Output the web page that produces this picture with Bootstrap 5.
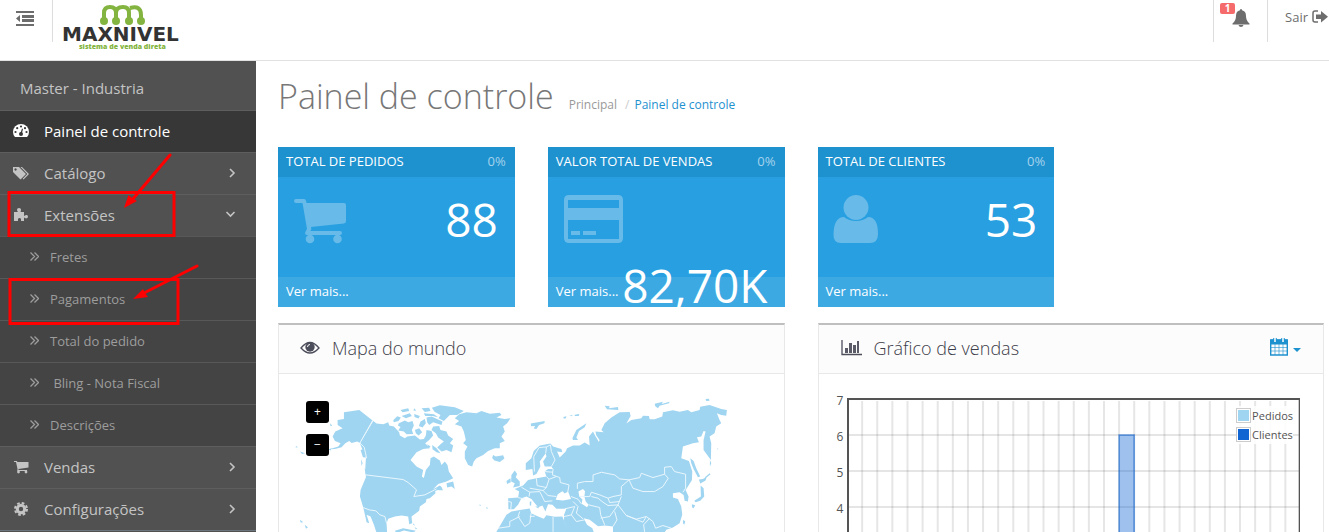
<!DOCTYPE html>
<html lang="pt-BR">
<head>
<meta charset="utf-8">
<meta name="viewport" content="width=device-width, initial-scale=1">
<title>Painel de controle</title>
<link href="https://cdn.jsdelivr.net/npm/bootstrap@5.3.0/dist/css/bootstrap.min.css" rel="stylesheet">
<style>
body{font-family:"Open Sans",sans-serif;font-size:13px;line-height:20px;color:#666;background:#fff}
a{text-decoration:none}
svg{display:block;flex:none}
.topbar{height:61px;border-bottom:1px solid #e1e1e1}
.topbar-cell{height:42px}
.menu-toggle{width:53px;border:0;border-right:1px solid #ddd;background:none;color:#6d6d6d;padding:0 0 6px 15px}
.logo-name{font:bold 20px "DejaVu Sans",sans-serif;fill:#333}
.logo-tag{font:800 7px "Open Sans",sans-serif;fill:#84b440}
.bell-link{width:55px;border-left:1px solid #ddd;border-right:1px solid #ddd;color:#6d6d6d;padding:9px 0 0 18px}
.bell-count{left:6px;top:3px;width:15px;height:11px;font-size:10px;line-height:11px;padding:0;background:#f56b6b;border-radius:2px}
.logout{color:#6d6d6d;padding:0 1px 8px 17px}
.sidebar{width:256px;background:#515151}
.profile{height:49px;padding:4px 20px 0;font-size:15px;color:#c4c4c4}
.side-link{height:42px;padding:0 20px 2px 13px;font-size:15px;color:#c4c4c4;border-top:1px solid #5e5e5e}
.side-link svg:first-child{width:16px;margin-right:15px}
.side-link.active{background:#373737;color:#fff}
.submenu{background:#444}
.sub-link{height:42px;padding:0 0 2px 30px;font-size:13px;color:#9d9d9d;border-top:1px solid #585858}
.sub-link svg{margin-right:11px}
.marks{left:0;top:0;pointer-events:none}
.content{padding:0 5px 0 22px}
.page-title{font-size:34px;line-height:46px;font-weight:300;color:#777;margin:0 15px 0 0}
.crumbs{--bs-breadcrumb-margin-bottom:0;--bs-breadcrumb-item-padding-x:8px;font-size:12px;--bs-breadcrumb-divider-color:#ccc}
.crumbs a{color:#999}
.crumbs .breadcrumb-item+.breadcrumb-item::before{padding-right:5px}
.crumbs .current a{color:#1e91cf}
.tiles,.panels{--bs-gutter-x:33px}
.tile{background:#279fe0;color:#fff}
.tile-head{height:30px;padding:0 9px 2px 8px;background:#1e91cf}
.tile-head span:last-child{color:#a5d3ec}
.tile-main{height:100px;padding:15px 17px 0 15px;z-index:1;pointer-events:none}
.tile-main svg{fill:#68bae9;color:#68bae9}
.tile-value{font-size:46px;line-height:54px;font-weight:400;margin:0}
.tile-foot{height:30px;padding:4px 8px;background:#3da9e3;color:#fff}
.box{border:1px solid #e8e8e8;border-top:2px solid #bfbfbf}
.box-head{height:49px;padding:0 21px 2px;background:#fcfcfc;border-bottom:1px solid #e8e8e8}
.box-head h2{font-size:18px;line-height:24px;font-weight:300;color:#3c3d4a;margin:0}
.date-btn{border:0;background:none;color:#1e91cf;padding:0 0 4px}
.zoom-set{left:27px;top:27px;gap:11px}
.zoom-set button{width:23px;height:22px;border:0;border-radius:3px;background:#000;color:#fff;font-size:12px;line-height:20px;padding:0}
.map-shape{fill:#9fd5f1}
.map-line{fill:none;stroke:#e9f6fd;stroke-width:3;stroke-linejoin:round}
.sea{fill:#fff}
.chart-area{padding:24px 23px 0 18px}
.y-axis{width:10px;font-size:12px;line-height:18px;margin:-6px 0 0;padding:0;color:#545454}
.y-axis li{height:36px}
.legend{top:8px;right:7px;background:rgba(255,255,255,.85);font-size:11px;line-height:19px;color:#545454;margin:0}
.swatch{width:15px;height:15px;margin-right:1px;border:1px solid #ccc;padding:1px;background-clip:content-box}
.swatch.pedidos{background-color:#9fd5f1}
.swatch.clientes{background-color:#1065d2}
</style>
</head>
<body class="vh-100 overflow-hidden d-flex flex-column">
<header class="topbar d-flex flex-shrink-0 align-items-start">
  <button class="menu-toggle topbar-cell" type="button" aria-label="Menu">
    <svg width="19" height="15" viewBox="0 0 19 15" fill="currentColor"><path d="M1 0h18v2H1zM7 4h12v3H7zM7 8h12v3H7zM1 13h18v2H1zM5 4v7L1 7.500z"/></svg>
  </button>
  <a href="#" class="ms-2" aria-label="Maxnivel">
    <svg width="124" height="54" viewBox="-4 0 124 54">
      <g fill="none" stroke="#84b440" stroke-width="4"><path d="M39 22V13Q39 7 45 7Q51 7 51 13V22M51 13Q51 7 58 7Q64 7 64 13V22M65 8Q76 5 76 15V22"/></g>
      <g fill="#84b440"><circle cx="39" cy="21" r="4"/><circle cx="51" cy="21" r="4"/><circle cx="64" cy="21" r="4"/><circle cx="76" cy="21" r="4"/></g>
      <text x="-3" y="41" class="logo-name">MAXNIVEL</text>
      <text x="14" y="49" class="logo-tag">sistema de venda direta</text>
    </svg>
  </a>
  <nav class="ms-auto d-flex">
    <a href="#" class="bell-link topbar-cell position-relative" aria-label="Notificações">
      <span class="bell-count badge position-absolute">1</span>
      <svg width="18" height="18" viewBox="0 0 18 18" fill="currentColor"><path d="M9 0Q10 0 10 1.200Q14 2 14 7Q14 12 17.500 14.500V15.500H.5V14.500Q4 12 4 7Q4 2 8 1.200Q8 0 9 0zM6.500 16H11.500Q11 18 9 18T6.500 16z"/></svg>
    </a>
    <a href="#" class="logout topbar-cell d-flex align-items-center gap-1">Sair
      <svg width="16" height="14" viewBox="0 0 16 14" fill="currentColor"><path d="M6 1H3Q1 1 1 3V10Q1 12 3 12H6" fill="none" stroke="currentColor" stroke-width="1.500"/><path d="M4 4.500H9V1L16 6.700L9 12.500V9H4z"/></svg>
    </a>
  </nav>
</header>
<div class="d-flex flex-grow-1 overflow-hidden">
  <aside class="sidebar flex-shrink-0 position-relative">
    <div class="profile d-flex align-items-center">Master - Industria</div>
    <nav>
      <a href="#" class="side-link active d-flex align-items-center">
        <svg width="16" height="13" viewBox="0 0 16 13" fill="currentColor"><path d="M2 13Q0 11 0 8A8 8 0 0 1 16 8Q16 11 14 13z"/><g fill="#373737"><circle cx="2.500" cy="8" r="1.100"/><circle cx="4.200" cy="4.200" r="1.100"/><circle cx="8" cy="2.500" r="1.100"/><circle cx="13.500" cy="8" r="1.100"/><circle cx="12" cy="4.200" r="1.100"/><circle cx="8" cy="10" r="2"/><path d="M7.500 9L9 4.500L10 5L8.700 10z"/></g></svg>
        <span>Painel de controle</span></a>
      <a href="#" class="side-link d-flex align-items-center">
        <svg width="16" height="14" viewBox="0 0 16 14" fill="currentColor"><path fill-rule="evenodd" d="M0 1H6L13 8L7.500 13.500L0 6zM2.500 2.300a1.200 1.200 0 1 0 .1 0z"/><path d="M7.500 1H9L16 8L10.500 13.500L9.700 12.700L14.300 8z"/></svg>
        <span class="me-auto">Catálogo</span>
        <svg width="7" height="10" viewBox="0 0 7 10" fill="none" stroke="currentColor" stroke-width="1.600"><path d="M1 1L5 5L1 9"/></svg></a>
      <a href="#" class="side-link d-flex align-items-center">
        <svg width="16" height="15" viewBox="0 0 16 15" fill="currentColor"><path d="M1 5H5Q4 4 4 2.500T6 1T8 2.500T7.500 5H11V9Q12 8.500 13 8Q15 7.500 15 9.500T13 11.500Q12 11 11 10.500V14H8Q8.500 11 6.500 11T5 14H1z"/></svg>
        <span class="me-auto">Extensões</span>
        <svg width="11" height="7" viewBox="0 0 11 7" fill="none" stroke="currentColor" stroke-width="1.600"><path d="M1.500 1L5.500 5L9.500 1"/></svg></a>
      <div class="submenu">
        <a href="#" class="sub-link d-flex align-items-center"><svg width="9" height="9" viewBox="0 0 9 9" fill="none" stroke="currentColor" stroke-width="1.300"><path d="M.5.500L4.500 4.500L.5 8.500M4.500.500L8.500 4.500L4.500 8.500"/></svg>Fretes</a>
        <a href="#" class="sub-link d-flex align-items-center"><svg width="9" height="9" viewBox="0 0 9 9" fill="none" stroke="currentColor" stroke-width="1.300"><path d="M.5.500L4.500 4.500L.5 8.500M4.500.500L8.500 4.500L4.500 8.500"/></svg>Pagamentos</a>
        <a href="#" class="sub-link d-flex align-items-center"><svg width="9" height="9" viewBox="0 0 9 9" fill="none" stroke="currentColor" stroke-width="1.300"><path d="M.5.500L4.500 4.500L.5 8.500M4.500.500L8.500 4.500L4.500 8.500"/></svg>Total do pedido</a>
        <a href="#" class="sub-link d-flex align-items-center"><svg width="9" height="9" viewBox="0 0 9 9" fill="none" stroke="currentColor" stroke-width="1.300"><path d="M.5.500L4.500 4.500L.5 8.500M4.500.500L8.500 4.500L4.500 8.500"/></svg>&nbsp;Bling - Nota Fiscal</a>
        <a href="#" class="sub-link d-flex align-items-center"><svg width="9" height="9" viewBox="0 0 9 9" fill="none" stroke="currentColor" stroke-width="1.300"><path d="M.5.500L4.500 4.500L.5 8.500M4.500.500L8.500 4.500L4.500 8.500"/></svg>Descrições</a>
      </div>
      <a href="#" class="side-link d-flex align-items-center">
        <svg width="16" height="14" viewBox="0 0 16 14" fill="currentColor"><path d="M1 1H4L4.300 2H15.500V7.500L5.500 9V10H14V11H4.300L4.500 9L3 2H1z"/><circle cx="5.500" cy="12" r="1.400"/><circle cx="13" cy="12" r="1.400"/></svg>
        <span class="me-auto">Vendas</span>
        <svg width="7" height="10" viewBox="0 0 7 10" fill="none" stroke="currentColor" stroke-width="1.600"><path d="M1 1L5 5L1 9"/></svg></a>
      <a href="#" class="side-link d-flex align-items-center">
        <svg width="16" height="14" viewBox="0 0 16 14" fill="none" stroke="currentColor"><circle cx="8" cy="7" r="3.700" stroke-width="3"/><circle cx="8" cy="7" r="6" stroke-width="2" stroke-dasharray="2.700 2.010"/></svg>
        <span class="me-auto">Configurações</span>
        <svg width="7" height="10" viewBox="0 0 7 10" fill="none" stroke="currentColor" stroke-width="1.600"><path d="M1 1L5 5L1 9"/></svg></a>
      <div class="border-top border-secondary"></div>
    </nav>
    <svg class="marks position-absolute" width="256" height="270" viewBox="0 61 256 270" fill="none" stroke="red" stroke-width="3">
      <rect x="9" y="192.500" width="165" height="43"/><rect x="10" y="279.500" width="168" height="44"/>
      <path d="M170 155L132 200M197 266L144 293" stroke-linecap="round"/>
      <path d="M124 208L128.500 195L132 198L137 201zM133 299L143 289L145 293L148 297z" fill="red" stroke="none"/>
    </svg>
  </aside>
  <main class="content flex-grow-1 overflow-hidden">
    <div class="d-flex align-items-end pt-2 mt-1 pb-2 mb-3">
      <h1 class="page-title mb-1">Painel de controle</h1>
      <nav aria-label="breadcrumb" class="pb-2"><ol class="breadcrumb crumbs">
        <li class="breadcrumb-item"><a href="#">Principal</a></li>
        <li class="breadcrumb-item current"><a href="#">Painel de controle</a></li>
      </ol></nav>
    </div>
    <div class="row tiles mb-3">
      <div class="col-3"><section class="tile">
        <div class="tile-head d-flex align-items-center justify-content-between"><span>TOTAL DE PEDIDOS</span><span>0%</span></div>
        <div class="tile-main position-relative d-flex flex-wrap align-items-start align-content-start">
          <svg width="64" height="66" viewBox="0 0 64 66"><path d="M3 7H11Q13 7 13.500 11H51Q53 11 53 13V29Q53 31 51 31.500L18 35Q19 37 17.500 39H47Q49 39 49 41T47 43H14Q12 43 12 41Q13 38 14 37L9.500 11H3Q1 11 1 9T3 7z"/><circle cx="17" cy="47" r="4.300"/><circle cx="44.500" cy="47" r="4.300"/></svg>
          <h3 class="tile-value ms-auto">88</h3>
        </div>
        <a href="#" class="tile-foot d-block">Ver mais...</a>
      </section></div>
      <div class="col-3"><section class="tile">
        <div class="tile-head d-flex align-items-center justify-content-between"><span>VALOR TOTAL DE VENDAS</span><span>0%</span></div>
        <div class="tile-main position-relative d-flex flex-wrap align-items-start align-content-start">
          <svg width="64" height="66" viewBox="0 0 64 66"><path fill-rule="evenodd" d="M6 3H55Q60 3 60 8V46Q60 51 55 51H6Q1 51 1 46V8Q1 3 6 3zM5 8V16H56V8zM5 28V47H56V28zM8 39H17V43H8zM20 39H33V43H20z"/></svg>
          <h3 class="tile-value ms-auto">82,70K</h3>
        </div>
        <a href="#" class="tile-foot d-block">Ver mais...</a>
      </section></div>
      <div class="col-3"><section class="tile">
        <div class="tile-head d-flex align-items-center justify-content-between"><span>TOTAL DE CLIENTES</span><span>0%</span></div>
        <div class="tile-main position-relative d-flex flex-wrap align-items-start align-content-start">
          <svg width="64" height="66" viewBox="0 0 64 66"><circle cx="23" cy="15.500" r="12.500"/><path d="M11 25Q16 29 23 29T35 25Q45 25 45 42Q45 51 37 51H8Q0 51 0.500 42Q1 25 11 25z"/></svg>
          <h3 class="tile-value ms-auto">53</h3>
        </div>
        <a href="#" class="tile-foot d-block">Ver mais...</a>
      </section></div>
    </div>
    <div class="row panels">
      <div class="col-6"><section class="box">
        <div class="box-head d-flex align-items-center">
          <svg class="me-2" width="20" height="14" viewBox="0 0 20 14"><path d="M1 7Q10-4 19 7Q10 17 1 7z" fill="none" stroke="#4c4d5a" stroke-width="1.300"/><circle cx="10" cy="6" r="4.700" fill="#4c4d5a"/><path d="M7.500 6Q7.500 3.500 10 3.500" fill="none" stroke="#fff"/></svg>
          <h2 class="ps-1">Mapa do mundo</h2>
        </div>
        <div class="position-relative">
          <div class="zoom-set position-absolute d-flex flex-column"><button type="button" aria-label="Aproximar">+</button><button type="button" aria-label="Afastar">−</button></div>
          <svg class="w-100" viewBox="27 177 1515 660" role="img" aria-label="Mapa do mundo">
            <g class="map-shape">
              <path d="M222 292L268 285L308 317L270 384L262 380L245 384L238 378L226 385L215 397L195 402L178 403L205 395L212 385L195 378L188 365L196 350L218 340L203 330L203 315L222 312z"/>
              <path d="M310 318L320 326L340 328L355 322L358 332L372 335L388 352L390 362L405 370L412 365L435 362L450 374L462 372L468 362L470 345L485 348L490 362L478 375L466 385L480 400L460 402L440 412L422 435L440 455L460 465L456 485L462 489L468 465L480 450L482 430L492 425L510 437L515 450L525 440L533 450L537 470L550 490L530 500L505 507L490 523L510 512L518 520L496 528L497 535L480 550L470 552L468 562L450 575L448 588L425 605L427 625L418 628L415 605L395 602L375 605L355 612L350 625L352 660L322 660L312 630L302 605L290 600L298 625L290 622L285 600L280 578L270 545L272 525L288 487L286 462L288 430L270 385z"/>
              <path d="M555 310L568 298L590 292L620 295L635 288L660 296L690 293L695 300L680 308L705 312L722 310L712 325L700 335L705 350L695 365L705 378L690 385L690 400L675 400L655 408L640 420L620 430L612 440L607 455L595 450L585 430L585 410L593 395L580 385L588 375L582 350L575 335L555 328L568 318z"/>
              <path d="M490 335L508 333L512 345L530 350L535 362L550 372L540 385L550 392L545 412L530 405L515 410L502 398L512 388L522 380L505 368L498 355L485 345zM387 325L405 317L415 322L428 318L432 332L426 345L430 357L410 358L402 350L385 347L392 336L384 332zM370 316L382 304L393 308L386 318L372 322zM395 303L420 295L426 303L408 310zM392 285L415 280L418 288L398 292zM435 280L438 288L430 286zM433 297L450 303L446 311L434 306zM452 320L465 312L468 325L458 338L447 333zM470 308L485 305L518 320L515 330L490 322L478 330L472 322zM455 280L478 278L482 288L465 291zM486 278L510 271L555 277L582 288L562 300L540 300L522 318L506 310L512 300L494 290zM462 295L492 298L505 307L488 303L466 303zM435 345L448 340L457 352L446 362L438 355zM487 390L500 400L512 415L500 412L488 403zM472 388L482 395L476 401zM498 520L512 515L520 526L507 526zM530 505L550 500L555 522L545 515L532 518zM670 420L678 425L700 421L704 431L690 441L674 437L667 429zM90 410L105 415L96 417zM175 404L185 400L182 407zM180 325L187 332L182 334zM78 393L84 397L77 398zM272 405L282 402L286 428L279 427zM284 460L293 470L296 482L287 477zM273 432L278 445L275 453zM90 615L100 622L92 623zM104 630L114 637L108 642zM630 568L634 572L629 573zM650 576L655 580L650 582zM430 625L436 632L430 630zM434 637L442 640L438 643zM375 648L400 640L438 648L430 653L402 647L380 655zM725 480L735 467L742 477L738 487L750 500L750 513L730 518L735 505L724 500zM710 498L722 490L723 502L712 507z"/>
            </g>
            <g class="map-line">
              <path d="M308 317L270 384L283 397L290 430M288 480L400 494L415 503L440 525L432 545L465 540L500 522M280 578L298 585L318 588L330 600L345 605L350 625"/>
            </g>
            <g transform="translate(780)">
              <g class="map-shape">
                <path d="M-12 465L-12 445L5 430L12 408L30 392L62 386L70 395L95 402L98 412L82 410L90 428L108 410L112 400L130 392L150 392L165 383L180 392L178 365L190 350L196 362L206 378L205 400L196 402L203 385L210 376L200 362L197 350L222 352L215 345L225 325L245 308L270 292L300 291L303 303L290 326L305 315L335 310L340 302L358 303L360 313L375 313L398 305L400 292L430 286L450 290L475 285L485 292L510 285L512 275L540 270L575 282L592 285L590 302L575 300L562 295L570 315L575 325L560 335L555 355L540 365L545 385L544 435L522 405L522 375L528 350L522 348L515 365L502 367L508 382L490 385L460 395L455 430L478 438L488 470L487 495L475 515L468 525L477 545L475 560L465 558L462 540L450 532L430 535L430 548L445 552L455 575L458 600L450 625L430 638L410 645L400 660L250 660L250 635L225 632L205 634L180 615L162 610L172 630L188 640L195 660L120 660L103 620L103 600L110 582L80 582L68 570L55 568L47 590L38 572L25 550L35 563L38 572L25 577L5 552L-10 545L-25 550L-35 570L-48 583L-64 583L-65 550L-35 548L-32 530L-45 522L-20 512L-5 495L20 490L50 485L45 470L55 462L70 462L65 455L45 455L40 440L50 425L48 415L30 440L32 455L20 477L10 482L8 462z"/>
                <path d="M-100 651L-85 625L-70 600L-55 590L-25 585L0 581L4 595L20 603L42 612L50 601L75 606L98 605L108 630L120 651V665H-105z"/>
                <path d="M128 370L140 345L170 325L165 337L148 348L140 368L145 375L130 375zM225 272L240 274L238 280L265 276L266 285L232 283zM375 266L400 260L396 267L420 260L418 265L390 272L385 280L377 274zM528 252L538 251L540 257L530 258zM101 306L110 304L108 311L102 311zM119 302L128 300L127 304zM135 299L149 297L147 303L135 303zM3 326L45 318L44 325L28 330L20 342L12 341L16 333L4 334zM482 430L492 438L500 460L512 485L505 487L492 462L485 445zM508 494L520 492L532 485L528 497L512 506zM513 512L522 520L524 545L512 558L498 562L494 558L514 545zM487 568L497 571L492 580L487 577zM540 475L543 478L528 490L526 487zM541 435L545 445L541 455zM563 400L567 402L564 404zM461 615L467 620L464 630L460 625zM0 560L5 560L4 573L0 571zM16 575L27 575L26 581z"/>
              </g>
              <path class="sea" d="M78 555L84 538L98 529L105 536L115 530L124 552L100 557zM146 530L160 522L166 529L164 545L168 560L177 570L172 577L156 567L158 554L149 545z"/>
              <g class="map-line">
                <path d="M14 470L12 425L28 398L50 396L48 415M50 396L62 390L65 410L76 435L65 455M70 462L68 480L90 488L92 503L118 510L114 532M20 490L22 512L50 518L58 493L50 485M50 518L40 527L0 520M40 527L55 542L80 545M-25 517L0 532L-2 545M0 532L30 530L45 560L68 558M-65 560L-55 562L-57 583M-35 548L-15 553M45 470L70 472M58 493L80 485M143 522L143 505L165 500L190 500L190 480L215 472L255 480L270 492L298 495L275 515L275 540L250 545L235 550L210 540L185 532L180 545L150 545M298 495L330 488L335 475L370 488L405 478L416 490L400 515L375 530L340 530L310 520zM405 478L405 457L425 455L435 470L468 478L468 520L460 532M185 545L205 550L220 562L235 572L265 570L275 545M235 550L240 563L270 560M177 570L210 578L213 600L225 630M213 610L240 605L265 570L290 602L320 613L350 605L370 620L378 640L400 632L425 640M250 635L262 615L255 590M290 602L340 622L350 605M345 651L342 630L360 610M124 545L145 553L155 567M130 560L145 575L140 595L160 612M103 605L125 600L135 575L105 582M125 600L140 620L165 615M70 606V651M-30 590L-35 605L-15 635L0 625L4 595M-30 605L-60 620L-60 635L-95 640M0 605L15 604"/>
              </g>
            </g>
          </svg>
        </div>
      </section></div>
      <div class="col-6"><section class="box">
        <div class="box-head d-flex align-items-center">
          <svg class="me-2" width="22" height="16" viewBox="0 0 22 16"><path d="M2 0V14.500H22" fill="none" stroke="#4c4d5a" stroke-width="1.300"/><path d="M5 8H8V13H5zM9 3H12V13H9zM13 5H16V13H13zM17 1H19V13H17z" fill="#5a5b66"/></svg>
          <h2 class="me-auto ps-1">Gráfico de vendas</h2>
          <button type="button" class="date-btn d-flex align-items-end gap-1" aria-label="Período">
            <svg width="18" height="19" viewBox="0 0 18 19" fill="none" stroke="currentColor"><path d="M.7 3H17.300V18H.7z" stroke-width="1.400"/><path d="M1 3H17V7H1z" fill="currentColor"/><path d="M1 10.500H17M1 14H17M5 7V18M9 7V18M13 7V18" opacity=".6"/><path d="M5 1V5M13 1V5" stroke-width="3.500"/><path d="M5 1V5M13 1V5" stroke="#fff" stroke-width="1.500"/></svg>
            <svg width="10" height="9" viewBox="0 0 10 9" fill="currentColor"><path d="M1 1H9L5 5z"/></svg>
          </button>
        </div>
        <div class="chart-area d-flex">
          <ol class="y-axis list-unstyled"><li>7</li><li>6</li><li>5</li><li>4</li><li>3</li><li>2</li></ol>
          <div class="flex-grow-1 position-relative">
            <svg id="plot" class="w-100" height="200" role="img" aria-label="Pedidos e clientes"></svg>
            <ul class="legend list-unstyled position-absolute">
              <li class="d-flex align-items-center"><span class="swatch pedidos"></span>Pedidos</li>
              <li class="d-flex align-items-center"><span class="swatch clientes"></span>Clientes</li>
            </ul>
          </div>
        </div>
      </section></div>
    </div>
  </main>
</div>
<script src="https://cdn.jsdelivr.net/npm/bootstrap@5.3.0/dist/js/bootstrap.bundle.min.js"></script>
<script>
// Daily grid (30 days) and unit rows of the sales chart
const days = 30, row = 36, top0 = 1;
let s = '';
for (let d = 1; d < days; d++) s += `<line x1="${d * 100 / days}%" x2="${d * 100 / days}%" y1="3" y2="100%" stroke="#e6e6e6" stroke-width="2"/>`;
for (let r = 1; r < 6; r++) s += `<line x1="0" x2="100%" y1="${top0 + r * row}" y2="${top0 + r * row}" stroke="#545454" stroke-opacity=".2" stroke-width="1.500"/>`;
s += `<rect x="${18 * 100 / days}%" y="${top0 + row}" width="${100 / days}%" height="300" fill="#1065d2" fill-opacity=".4" stroke="#1065d2" stroke-opacity=".6" stroke-width="1.500"/>`;
s += '<rect x="1" y="1" width="99.600%" height="400" fill="none" stroke="#545454" stroke-width="2"/>';
document.getElementById('plot').innerHTML = s;
</script>
</body>
</html>
